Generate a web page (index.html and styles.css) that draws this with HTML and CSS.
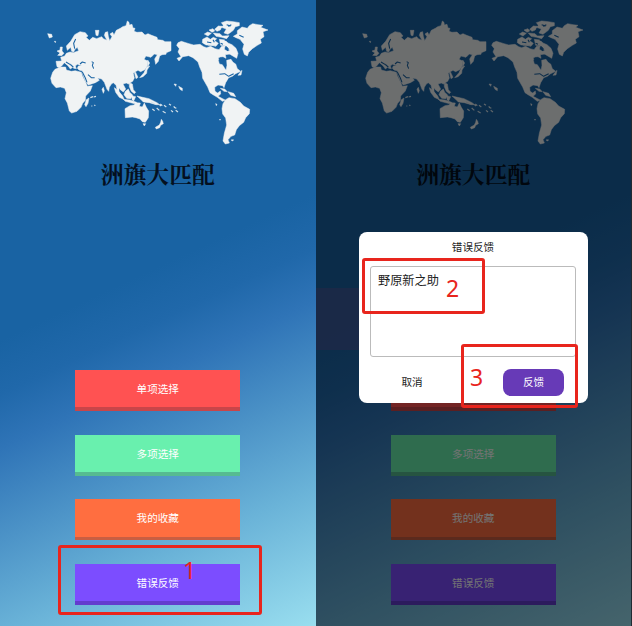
FILE: index.html
```html
<!DOCTYPE html>
<html lang="zh-CN">
<head>
<meta charset="utf-8">
<title>洲旗大匹配</title>
<link rel="stylesheet" href="styles.css">
</head>
<body>
<svg class="defs" width="0" height="0" aria-hidden="true">
  <symbol id="world" viewBox="0 0 720 420">
    <g class="land">
      <!-- Europe and Asia -->
      <path d="M51 170L48 154L65 153L62 142L74 138L79 130L90 126L100 128L116 122L112 112L105 118L101 126L95 124L92 112L82 121L79 108L92 94L104 74L120 65L136 68L144 78L138 82L148 91L158 82L170 86L185 80L190 86L201 91L193 76L196 67L203 65L205 79L209 92L216 80L210 72L218 67L222 75L229 61L241 55L248 50L258 47L262 33L267 37L268 45L276 43L279 54L285 55L282 64L291 67L306 66L315 75L324 71L335 76L351 82L353 89L368 91L375 95L393 95L393 122L379 128L378 133L366 134L359 138L355 154L347 163L344 147L352 134L343 132L333 142L318 138L312 148L323 153L323 166L314 179L302 185L294 181L286 185L294 202L288 206L283 187L280 190L283 204L278 214L265 222L259 219L249 222L257 237L250 246L241 239L237 233L237 246L247 262L239 256L232 242L228 226L220 218L214 222L208 232L206 244L201 238L193 217L185 207L173 204L178 211L166 218L145 225L137 216L127 190L128 183L117 180L112 175L115 168L125 167L112 163L106 168L109 176L101 175L95 164L88 159L98 172L91 177L84 167L73 158L65 168L58 173Z"/>
      <!-- Africa -->
      <path d="M45 178L62 171L77 171L79 180L94 184L106 182L124 187L127 197L138 220L142 229L157 227L151 243L137 258L136 271L128 280L123 292L111 304L95 309L88 303L82 279L75 266L79 248L74 235L61 231L48 233L36 220L32 205L38 187Z"/>
      <path d="M139 269L147 264L144 280L138 290L134 284ZM51 123L60 120L61 111L67 111L66 123L72 130L65 137L53 136L60 129ZM23 71L35 73L37 81L28 84ZM43 94L47 94L46 98ZM166 61L177 61L174 77L168 76ZM186 238L190 232L193 242L190 250Z"/>
      <!-- Japan and the western Pacific islands -->
      <path d="M323 150L329 159L324 168ZM320 170L329 168L321 180L320 190L309 200L299 203L312 188ZM268 218L277 222L280 239L287 247L283 251L274 244L268 230ZM256 244L265 237L269 247L278 255L272 266L260 265L252 254ZM223 233L233 240L248 258L253 269L238 262L227 247ZM250 268L270 270L290 277L287 282L256 274ZM275 257L287 260L281 273L276 269ZM291 258L308 262L327 266L351 278L359 284L348 284L328 278L310 276L302 268Z"/>
      <!-- Australia and New Zealand -->
      <path d="M255 296L270 287L282 285L289 278L301 279L298 289L307 291L313 279L319 292L326 303L325 323L316 337L307 335L300 327L288 323L277 321L256 323ZM309 341L317 341L313 348ZM364 328L368 334L370 341L362 346L359 353L349 357L346 352L358 345L362 337Z"/>
      <!-- North America -->
      <path d="M414 98L424 94L447 101L461 105L480 103L491 110L500 113L512 109L525 116L537 119L545 109L555 108L553 118L562 124L570 132L556 134L558 145L549 140L539 141L535 151L538 162L547 164L553 173L558 181L561 166L560 151L573 148L579 157L587 162L592 176L602 184L587 191L577 199L566 203L557 218L552 233L548 227L534 225L524 232L525 244L533 249L541 243L542 252L534 259L548 266L557 271L547 274L532 262L519 254L510 248L503 231L488 205L486 187L479 171L474 156L459 143L446 137L428 140L417 153L411 145L423 140L414 126L418 116L410 106Z"/>
      <!-- Canadian Arctic islands -->
      <path d="M493 72L503 66L514 70L504 78ZM507 60L519 56L524 63L516 67ZM524 58L535 48L546 49L541 60L531 64ZM544 38L560 33L580 35L598 38L598 47L586 50L580 61L564 73L552 69L559 57L544 52L550 46ZM488 88L501 81L511 88L520 82L530 86L524 92L535 100L528 109L514 105L498 105L487 98ZM520 69L540 71L547 78L567 77L560 86L545 82L528 79ZM538 88L555 90L564 99L576 104L588 115L594 130L590 145L572 134L560 126L569 121L558 108L542 106Z"/>
      <!-- Greenland -->
      <path d="M580 79L592 72L592 62L606 51L622 55L628 47L638 41L654 44L669 46L662 52L684 60L669 65L672 80L661 88L664 99L652 106L637 116L626 127L622 138L613 133L608 117L612 103L600 88L588 83Z"/>
      <!-- South America -->
      <path d="M557 269L567 263L585 266L601 277L611 288L629 298L628 311L617 323L611 337L598 347L589 359L584 375L573 379L564 389L568 399L556 402L549 393L553 370L560 345L557 324L548 312L546 296L549 281Z"/>
      <path d="M541 235L554 237L562 245L552 244ZM564 245L581 250L587 260L572 256ZM573 390L580 389L579 393ZM527 281L531 283L529 287ZM602 185L606 181L603 195L594 196ZM402 222L409 223L407 229ZM416 229L427 235L427 242L420 238Z"/>
    </g>
    <g class="islands">
      <path d="M332 275l12 6m14 3l5 4m-26 9l7 5m6-8l8 7m3-19l6 5m5-1l7 5m8-9l6 4m9 6l7 3m-41 9l9 5m16-8l6 5m8-5l7 5m-13-17l5 5M151 263l8-3m2 1l7-2m-14 29l3 0m6-3l3 2M538 329l4 0M503 105l23 2"/>
    </g>
    <g class="water">
      <path d="M107 87L101 100L104 116M120 162L127 156L137 159M155 155L160 158L157 166L161 176M127 186L136 204L141 217M144 194L154 203L164 203M536 144L550 151L550 162M538 193L554 191L566 199L581 191M78 156L91 164L100 171M501 96l13 2m5-9l4 8m19 3l7 3m9 7l7 7m-1-68l10-5M554 90l20 5M598 76l13 6M560 44l12 4m-26 22l9 4"/>
    </g>
  </symbol>
</svg>
<main class="screens">
  <section class="screen">
    <svg class="map"><use href="#world"/></svg>
    <h1 class="title">洲旗大匹配</h1>
    <nav class="menu">
      <button class="item red">单项选择</button>
      <button class="item green">多项选择</button>
      <button class="item orange">我的收藏</button>
      <button class="item purple">错误反馈</button>
    </nav>
    <div class="mark mark-one"><span>1</span></div>
  </section>
  <section class="screen second">
    <svg class="map"><use href="#world"/></svg>
    <h1 class="title">洲旗大匹配</h1>
    <nav class="menu">
      <button class="item red"></button>
      <button class="item green">多项选择</button>
      <button class="item orange">我的收藏</button>
      <button class="item purple">错误反馈</button>
    </nav>
    <div class="shade"></div>
    <div class="tint"></div>
    <div class="dialog">
      <h2 class="dialog-title">错误反馈</h2>
      <div class="field">野原新之助</div>
      <div class="actions">
        <button class="cancel">取消</button>
        <button class="submit">反馈</button>
      </div>
    </div>
    <div class="mark mark-two"><span>2</span></div>
    <div class="mark mark-three"><span>3</span></div>
  </section>
</main>
</body>
</html>
```
FILE: styles.css
```css
* { box-sizing: border-box; }
body {
  margin: 0;
  width: 632px;
  height: 626px;
  overflow: hidden;
  background: #202b32;
  font-family: "Noto Sans CJK SC", sans-serif;
}
button { border: 0; padding: 0; margin: 0; font-family: inherit; }
.defs { position: absolute; }
.screens { display: grid; grid-template-columns: 315.5px 315.5px; height: 626px; }
.screen {
  position: relative;
  overflow: hidden;
  display: flex;
  flex-direction: column;
  align-items: center;
  background: linear-gradient(155deg, #1963a3 0%, #1963a3 44%, #2068aa 51%, #2f74b7 58%, #6ab3d8 82%, #99deef 100%);
}
.map { width: 240px; height: 140px; margin: 10px 0 0 4px; flex: none; }
.land { fill: #f0f3f4; stroke: #f0f3f4; stroke-width: 1.5; stroke-linejoin: round; }
.islands { fill: none; stroke: #d5e2ea; stroke-width: 3.5; }
.water { fill: none; stroke: #1963a3; stroke-width: 3.2; stroke-linejoin: round; }
.title {
  margin: 7px 0 0;
  height: 34px;
  font: 700 22.8px/34px "Noto Serif CJK SC", "Source Han Serif SC", "Noto Sans CJK SC", serif;
  color: #04101f;
}
.menu { display: grid; grid-auto-rows: 41px; gap: 23.6px; margin-top: 179px; }
.item {
  width: 165px;
  height: 41px;
  padding-bottom: 3px;
  font-size: 10.6px;
  line-height: 38px;
  color: #fff;
}
.red { background: #ff5252; box-shadow: inset 0 -4px #c94549; }
.green { background: #69f0ae; box-shadow: inset 0 -4px #56bb91; }
.orange { background: #ff6e40; box-shadow: inset 0 -3px #c95e42; }
.purple { background: #7c4dff; box-shadow: inset 0 -4px #633dce; }
.shade { position: absolute; inset: 0; background: rgba(0, 0, 0, .55); }
.tint { position: absolute; left: 0; top: 288px; width: 44px; height: 62px; background: rgba(65, 35, 65, .27); }
.dialog {
  position: absolute;
  left: 43.5px;
  top: 231.5px;
  width: 229px;
  height: 171.5px;
  padding: 6px 12px 7.5px 11px;
  border-radius: 8px;
  background: #fff;
  display: flex;
  flex-direction: column;
  color: #222;
}
.dialog-title { margin: 0; text-align: center; font-size: 10.6px; font-weight: 400; line-height: 18px; }
.field {
  height: 92px;
  margin-top: 10px;
  padding: 4px 7px;
  border: 1px solid #bbb;
  border-radius: 3px;
  font-size: 12.2px;
  line-height: 18px;
}
.actions { display: flex; justify-content: space-between; margin: 11.5px 12px 0 22px; }
.cancel, .submit { height: 27px; font-size: 10.6px; line-height: 26px; }
.cancel { width: 40px; background: transparent; color: #222; }
.submit { width: 61px; border-radius: 8px; background: #673ab7; color: #fff; }
.mark {
  position: absolute;
  border: 3px solid #e8251d;
  border-radius: 3px;
  font: 23px/24px "Noto Sans", sans-serif;
  color: #e8251d;
}
.mark span { position: absolute; }
.mark-one { left: 58px; top: 545px; width: 204px; height: 70px; }
.mark-one span { left: 122px; top: 10px; }
.mark-two { left: 46.5px; top: 258px; width: 123px; height: 56px; }
.mark-two span { left: 81px; top: 15px; }
.mark-three { left: 145.5px; top: 344px; width: 117px; height: 64px; }
.mark-three span { left: 6px; top: 18px; }
```
